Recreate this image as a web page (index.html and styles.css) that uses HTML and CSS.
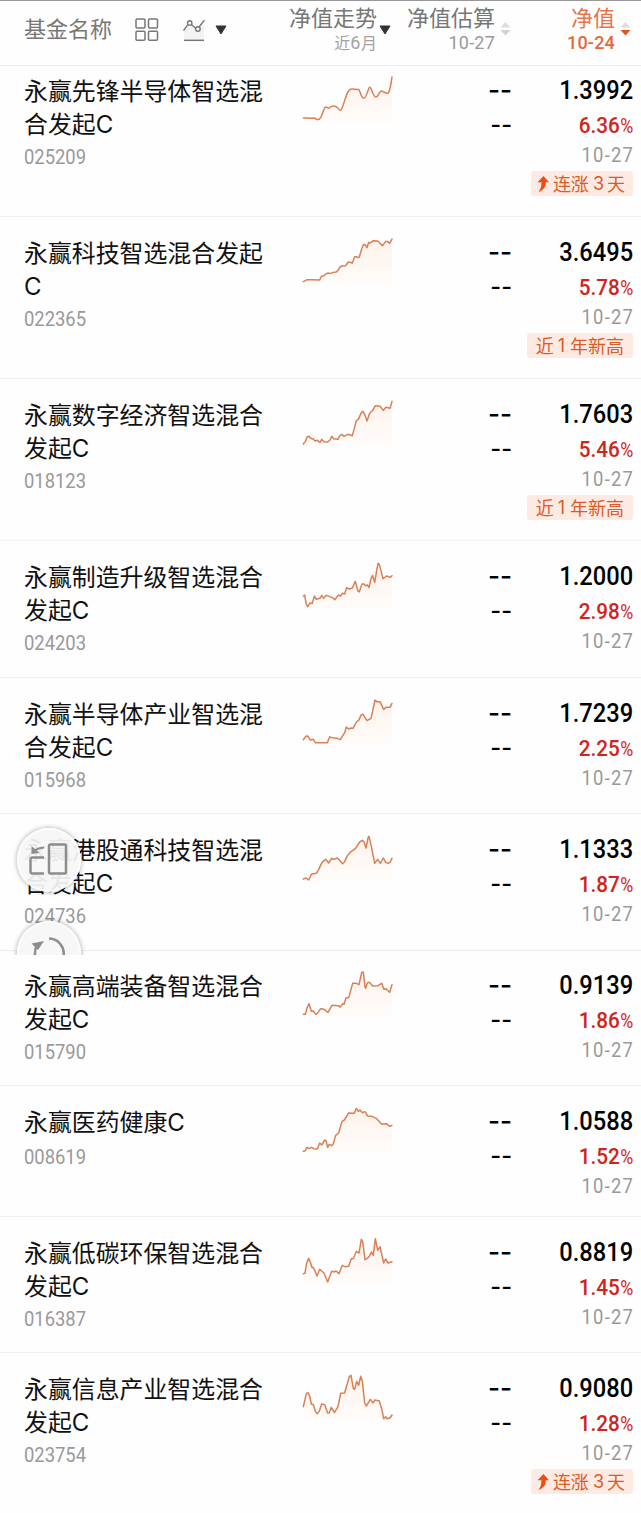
FILE: index.html
```html
<!DOCTYPE html>
<html lang="zh-CN">
<head>
<meta charset="utf-8">
<title>基金列表</title>
<link rel="stylesheet" href="styles.css">
</head>
<body>
<svg class="defs" width="0" height="0" aria-hidden="true">
  <defs>
    <linearGradient id="fade" x1="0" y1="0" x2="0" y2="1">
      <stop offset="0" stop-color="#fdeee4" stop-opacity=".8"/>
      <stop offset="1" stop-color="#fff8f3" stop-opacity=".4"/>
    </linearGradient>
    <symbol id="rise" viewBox="0 0 12 16"><path d="M6.500 0 12 6.300H8.800C8.800 10.500 7 14 1.500 16 4 12.500 4.500 10 4.400 6.300H.5Z" fill="#ee4d12"/></symbol>
  </defs>
</svg>
<div class="page">
  <header class="head">
    <div class="head-name">
      <span class="head-title">基金名称</span>
      <svg class="icon-grid" width="24" height="24" viewBox="0 0 24 24" fill="none" stroke="#777" stroke-width="1.500"><rect x="1" y="1" width="9" height="9" rx="1"/><rect x="13.500" y="1" width="9" height="9" rx="1"/><rect x="1" y="13.300" width="9" height="9" rx="1"/><rect x="13.500" y="13.300" width="9" height="9" rx="1"/></svg>
      <svg class="icon-chart" width="22" height="23" viewBox="0 0 22 23" fill="none" stroke="#777" stroke-width="1.400"><path d="M1 11v9h20V6l-6 4-8-4z" fill="#f3f3f3" stroke="none"/><path d="M.5 11.500 4.900 5.600M8.600 5.800l4.200 3.400M16.200 7.800 21.500 1.300"/><circle cx="6.700" cy="3.900" r="2.200"/><circle cx="14.900" cy="10" r="2.300"/><path d="M1 21.300h20" stroke-width="1.500"/></svg>
      <svg class="icon-drop" width="12" height="10" viewBox="0 0 12 10"><path d="M1 1h10L6 9z" fill="#333" stroke="#333" stroke-linejoin="round"/></svg>
    </div>
    <div class="head-trend"><span class="head-title">净值走势</span><span class="head-sub">近<span class="lat-sub">6</span>月</span></div>
    <svg class="icon-drop trend-drop" width="12" height="10" viewBox="0 0 12 10"><path d="M1 1h10L6 9z" fill="#333" stroke="#333" stroke-linejoin="round"/></svg>
    <div class="head-est"><span class="head-title">净值估算</span><span class="head-sub num">10-27</span></div>
    <svg class="icon-sort" width="11" height="14" viewBox="0 0 11 14"><path d="M5.500 0 10.500 5.500H.5z" fill="#ddd"/><path d="M5.500 13.500 10.500 8H.5z" fill="#d3d3d3"/></svg>
    <div class="head-nav"><span class="head-title">净值</span><span class="head-sub num">10-24</span></div>
    <svg class="icon-sort" width="11" height="14" viewBox="0 0 11 14"><path d="M5.500 0 10.500 5.500H.5z" fill="#ddd"/><path d="M5.500 13.500 10.500 8H.5z" fill="#e9531f"/></svg>
  </header>

  <main>
    <section class="row row-first">
      <div class="fund"><div class="name">永赢先锋半导体智选混<br>合发起<span class="lat">C</span></div><div class="code num">025209</div></div>
      <svg class="spark" viewBox="0 42 390 144"><path class="area" d="M40 174L75 174 85 180 93 171 107 141 117 145 128 137 140 141 151 151 160 137 174 98 184 87 206 88 217 113 227 111 239 82 250 108 263 109 273 92 294 101 306 52V186H40Z"/><path class="line" d="M40 174C52 174 62 175 74 174C80 180 88 182 93 171C100 157 102 142 107 141C112 141 115 147 119 143C126 136 134 138 140 141C147 146 149 155 154 148C164 131 169 88 184 87C193 86 203 90 206 88C211 91 213 115 221 114C230 115 235 82 239 82C245 82 248 110 258 111C265 111 269 93 273 93C279 93 285 100 294 100C301 92 303 70 306 51"/></svg>
      <div class="est"><span>--</span><span>--</span></div>
      <div class="nav"><span class="value num">1.3992</span><span class="pct num">6.36<i>%</i></span><span class="date num">10-27</span><span class="tag tag-rise"><svg width="12" height="16"><use href="#rise"/></svg>连涨<b>3</b>天</span></div>
    </section>

    <section class="row h162">
      <div class="fund"><div class="name">永赢科技智选混合发起<br><span class="lat">C</span></div><div class="code num">022365</div></div>
      <svg class="spark" viewBox="0 48 390 144"><path class="area" d="M40 185L55 179 90 180 105 163 140 153 155 139 188 128 195 109 208 111 222 74 250 62 278 77 306 58V192H40Z"/><path class="line" d="M40 185L52 179 66 179 89 180 94 169 101 168 108 161 115 159 119 161 130 157 139 156 144 151 150 141 156 138 167 137 175 126 187 129 194 110 199 110 203 113 208 111 216 84 221 73 226 75 231 83 236 67 241 69 250 62 263 63 270 70 278 77 287 64 293 65 299 70 306 57"/></svg>
      <div class="est"><span>--</span><span>--</span></div>
      <div class="nav"><span class="value num">3.6495</span><span class="pct num">5.78<i>%</i></span><span class="date num">10-27</span><span class="tag">近<b>1</b>年新高</span></div>
    </section>

    <section class="row h162">
      <div class="fund"><div class="name">永赢数字经济智选混合<br>发起<span class="lat">C</span></div><div class="code num">018123</div></div>
      <svg class="spark" viewBox="0 534 390 144"><path class="area" d="M40 672L55 649 90 667 187 647 200 601 219 573 231 603 256 557 280 571 300 565 306 544V678H40Z"/><path class="line" d="M40 672L46 664 52 650 57 649 62 655 70 657 75 663 82 661 90 667 95 658 102 665 113 666 120 660 125 649 131 656 144 658 149 648 155 643 162 649 174 643 187 647 192 629 199 602 205 598 214 578 219 574 224 583 231 603 239 580 248 571 256 557 270 559 280 571 288 562 300 565 306 544"/></svg>
      <div class="est"><span>--</span><span>--</span></div>
      <div class="nav"><span class="value num">1.7603</span><span class="pct num">5.46<i>%</i></span><span class="date num">10-27</span><span class="tag">近<b>1</b>年新高</span></div>
    </section>

    <section class="row h137">
      <div class="fund"><div class="name">永赢制造升级智选混合<br>发起<span class="lat">C</span></div><div class="code num">024203</div></div>
      <svg class="spark" viewBox="0 60 390 144"><path class="area" d="M40 168L53 200 73 168 135 179 170 143 196 124 207 155 248 106 265 69 279 116 306 107V204H40Z"/><path class="line" d="M40 168L44 165 49 194 53 200 60 189 67 190 73 168 79 178 91 174 95 166 101 175 109 166 126 172 135 179 145 165 152 168 157 160 164 162 170 143 177 147 187 144 196 124 204 154 208 155 216 132 222 132 226 137 232 135 237 143 243 116 248 106 254 127 264 70 268 73 279 116 290 108 301 112 306 107"/></svg>
      <div class="est"><span>--</span><span>--</span></div>
      <div class="nav"><span class="value num">1.2000</span><span class="pct num">2.98<i>%</i></span><span class="date num">10-27</span></div>
    </section>

    <section class="row h136">
      <div class="fund"><div class="name">永赢半导体产业智选混<br>合发起<span class="lat">C</span></div><div class="code num">015968</div></div>
      <svg class="spark" viewBox="0 471 390 144"><path class="area" d="M40 599L52 588 75 607 112 608 150 598 169 561 189 564 217 522 231 541 243 535 256 480 270 485 281 508 300 502 306 491V612H40Z"/><path class="line" d="M40 599L48 589 53 588 61 600 70 598 76 608 112 608 119 590 125 593 141 595 151 599 164 578 169 561 176 567 183 564 189 565 199 546 206 541 214 524 219 523 231 542 243 535 249 508 255 480 261 485 270 485 281 508 288 502 300 502 306 490"/></svg>
      <div class="est"><span>--</span><span>--</span></div>
      <div class="nav"><span class="value num">1.7239</span><span class="pct num">2.25<i>%</i></span><span class="date num">10-27</span></div>
    </section>

    <section class="row h137">
      <div class="fund"><div class="name">永赢港股通科技智选混<br>合发起<span class="lat">C</span></div><div class="code num">024736</div></div>
      <svg class="spark" viewBox="0 39 390 144"><path class="area" d="M40 177L66 162 82 157 107 118 140 114 158 131 180 97 217 61 228 84 236 50 254 129 294 130 306 115V183H40Z"/><path class="line" d="M40 177L48 174 56 180 65 162 79 160 86 149 96 127 107 118 116 129 125 115 132 118 142 114 149 121 158 131 164 125 171 109 180 97 196 86 209 66 217 61 222 66 228 84 234 54 237 49 244 79 254 130 263 118 271 130 280 114 287 127 294 130 300 127 306 115"/></svg>
      <div class="est"><span>--</span><span>--</span></div>
      <div class="nav"><span class="value num">1.1333</span><span class="pct num">1.87<i>%</i></span><span class="date num">10-27</span></div>
    </section>

    <section class="row row-seam">
      <div class="fund"><div class="name">永赢高端装备智选混合<br>发起<span class="lat">C</span></div><div class="code num">015790</div></div>
      <svg class="spark" viewBox="0 447 390 144"><path class="area" d="M40 583L57 551 76 581 114 577 156 556 176 533 189 490 208 494 218 454 226 505 275 490 299 517 306 494V588H40Z"/><path class="line" d="M40 583L46 583 52 561 57 551 64 574 70 573 77 583 82 580 92 566 102 568 114 577 126 556 144 557 151 561 158 551 162 553 168 533 176 533 188 490 199 490 207 494 215 458 220 456 225 500 227 505 232 489 238 487 248 498 264 497 275 490 282 508 288 506 299 517 306 494"/></svg>
      <div class="est"><span>--</span><span>--</span></div>
      <div class="nav"><span class="value num">0.9139</span><span class="pct num">1.86<i>%</i></span><span class="date num">10-27</span></div>
    </section>

    <section class="row h131">
      <div class="fund"><div class="name">永赢医药健康<span class="lat">C</span></div><div class="code num">008619</div></div>
      <svg class="spark" viewBox="0 45 390 144"><path class="area" d="M40 184L82 177 104 149 119 166 136 142 156 94 179 68 200 56 260 86 299 109 306 106V187H40Z"/><path class="line" d="M40 184L45 183 51 172 58 175 65 172 71 176 82 177 89 159 95 165 104 150 108 152 113 172 118 163 125 167 130 161 137 136 146 129 156 94 163 90 176 69 187 70 193 70 199 55 205 64 210 60 217 68 225 65 233 78 246 79 260 86 275 103 289 101 299 109 306 106"/></svg>
      <div class="est"><span>--</span><span>--</span></div>
      <div class="nav"><span class="value num">1.0588</span><span class="pct num">1.52<i>%</i></span><span class="date num">10-27</span></div>
    </section>

    <section class="row h136">
      <div class="fund"><div class="name">永赢低碳环保智选混合<br>发起<span class="lat">C</span></div><div class="code num">016387</div></div>
      <svg class="spark" viewBox="0 438 390 144"><path class="area" d="M40 551L56 506 80 557 113 575 150 548 178 527 207 489 214 448 226 512 244 486 256 446 281 517 306 515V582H40Z"/><path class="line" d="M40 551L45 550 50 519 56 505 62 519 65 531 71 534 81 558 89 538 102 549 113 576 125 544 132 546 138 543 147 551 157 526 165 530 176 529 184 506 190 506 199 484 207 489 214 448 218 454 225 509 231 506 238 499 244 486 250 496 256 446 263 481 270 470 281 519 287 507 294 519 306 515"/></svg>
      <div class="est"><span>--</span><span>--</span></div>
      <div class="nav"><span class="value num">0.8819</span><span class="pct num">1.45<i>%</i></span><span class="date num">10-27</span></div>
    </section>

    <section class="row row-last">
      <div class="fund"><div class="name">永赢信息产业智选混合<br>发起<span class="lat">C</span></div><div class="code num">023754</div></div>
      <svg class="spark" viewBox="0 36 390 144"><path class="area" d="M40 140L52 98 82 161 97 131 115 161 133 158 154 100 182 46 193 88 212 50 228 138 268 122 282 177 306 166V180H40Z"/><path class="line" d="M40 140L49 101 54 98 59 108 64 132 70 134 77 156 82 161 88 153 95 132 104 134 113 159 118 158 124 142 133 158 144 140 152 100 164 99 178 50 183 46 190 86 194 88 200 64 206 76 212 49 217 64 224 129 229 138 241 118 249 129 255 120 268 123 275 146 281 176 287 170 292 176 300 174 306 165"/></svg>
      <div class="est"><span>--</span><span>--</span></div>
      <div class="nav"><span class="value num">0.9080</span><span class="pct num">1.28<i>%</i></span><span class="date num">10-27</span><span class="tag tag-rise"><svg width="12" height="16"><use href="#rise"/></svg>连涨<b>3</b>天</span></div>
    </section>
  </main>

  <div class="float float-rotate">
    <svg width="64" height="64" viewBox="0 0 64 64" fill="none" stroke="#8d8d8d" stroke-width="2.500"><rect x="32" y="16.500" width="17" height="29" rx="1.500"/><path d="M27 29.500H15.500q-2 0-2 2V43.500q0 2 2 2H27"/><path d="M17 23.500Q20 20 27 19.500" stroke-width="2"/><path d="M14.500 18V26L22.500 25z" fill="#8d8d8d" stroke="none"/></svg>
  </div>
  <div class="float-clip">
    <div class="float">
      <svg width="64" height="64" viewBox="0 0 64 64" fill="none" stroke="#8d8d8d" stroke-width="2.500"><path d="M32 17.500A15 15 0 0 1 46.500 35M20 24Q17.500 29 18 35"/><path d="M14.500 22.500 27 20 21 29z" fill="#8d8d8d" stroke="none"/></svg>
    </div>
  </div>
</div>
</body>
</html>
```
FILE: styles.css
```css
* { box-sizing: border-box; }
body {
  margin: 0;
  background: #fefefe;
  color: #111;
  font-family: "Noto Sans CJK SC", sans-serif;
}
svg { display: block; flex: none; }
.defs { position: absolute; }
.page {
  position: relative;
  width: 641px;
  height: 1513px;
  overflow: hidden;
  border-top: 1px solid #999;
}
.num { font-family: Roboto, sans-serif; }

/* header */
.head {
  display: flex;
  height: 65px;
  border-bottom: 1px solid #ededed;
  color: #777;
}
.head-title {
  font-size: 22px;
  line-height: 32px;
  font-weight: 400;
  white-space: nowrap;
}
.head-name { display: flex; width: 265px; padding-left: 24px; }
.head-name .head-title { padding-top: 10px; }
.icon-grid { margin: 17px 0 0 23px; }
.icon-chart { margin: 18px 0 0 24px; }
.icon-drop { margin: 24px 0 0 10px; }
.head-trend, .head-est, .head-nav {
  display: flex;
  flex-direction: column;
  align-items: flex-end;
  height: 60px;
}
.head-trend .head-title, .head-est .head-title, .head-nav .head-title {
  height: 31px;
  line-height: 30px;
}
.head-trend { width: 112px; }
.trend-drop { margin: 24px 0 0 2px; }
.head-est { width: 104px; }
.head-sub {
  font-size: 16px;
  line-height: 21px;
  color: #a3a3a3;
}
.lat-sub { font-family: Roboto, sans-serif; font-size: 18px; letter-spacing: .5px; }
.head-sub.num { font-size: 18px; line-height: 22px; letter-spacing: .2px; color: #999; }
.icon-sort { margin: 21px 0 0 5px; }
.head-nav { width: 104px; color: #e97448; }
.head-nav .head-sub.num { color: #e5683a; font-weight: 500; }

/* rows */
.row {
  display: grid;
  grid-template-columns: 290px 130px 92px 121px;
  align-items: start;
  padding-top: 19px;
  border-bottom: 1px solid #efefef;
}
.h162 { height: 162px; }
.h137 { height: 137px; }
.h136 { height: 136px; }
.h131 { height: 131px; }
.row-first { height: 151px; padding-top: 8px; }
.row-seam { height: 135px; padding-top: 18px; }
.row-last { height: 160px; border-bottom: 0; }

.fund { padding-left: 24px; margin-top: -1px; }
.name {
  font-size: 23.900px;
  line-height: 33.200px;
  white-space: nowrap;
}
.lat { font-family: Inter, sans-serif; font-size: 24px; line-height: 1; }
.code {
  margin-top: 3px;
  font-size: 20px;
  line-height: 30px;
  color: #999;
  transform: scaleX(.92);
  transform-origin: left;
}
.h131 .code { margin-top: 5px; }
.spark { width: 130px; height: 48px; }
.line {
  fill: none;
  stroke: #d98056;
  stroke-width: 4.500;
  stroke-linejoin: round;
  stroke-linecap: round;
}
.area { fill: url(#fade); }

.est {
  display: flex;
  flex-direction: column;
  align-items: flex-end;
  margin-top: -1px;
  font-family: Inter, sans-serif;
  font-size: 26px;
  font-weight: 500;
  line-height: 34px;
  color: #000;
}
.est span + span { font-size: 23.500px; line-height: 35px; }

.nav { display: flex; flex-direction: column; align-items: flex-end; }
.nav .num { transform: scaleX(.92); transform-origin: right; }
.nav .value { transform: scaleX(.91); }
.value { font-size: 26px; font-weight: 500; line-height: 33px; color: #000; }
.pct { font-size: 22.500px; font-weight: 500; line-height: 36px; color: #cf2420; }
.pct i { font-style: normal; font-weight: 400; display: inline-block; font-size: 21px; line-height: 1; transform: scaleX(.92); transform-origin: right; margin-left: -1px; }
.date { font-size: 20px; line-height: 25px; color: #999; letter-spacing: 1.300px; margin-right: -1px; }
.tag {
  display: flex;
  align-items: center;
  height: 25px;
  margin-top: 3px;
  padding: 0 9px;
  border-radius: 3px;
  background: #fdebe3;
  color: #dc5a26;
  font-size: 18px;
  line-height: 23px;
  white-space: nowrap;
}
.tag b { font-family: Inter, sans-serif; font-weight: 400; font-size: 18px; margin: 0 5px 0 4px; }
.tag-rise { padding: 0 8px 0 6px; }
.tag-rise b { margin: 0 3px 0 4px; }
.tag-rise svg { margin-right: 4px; }

/* floating controls */
.float {
  width: 64px;
  height: 64px;
  border-radius: 50%;
  background: rgba(246, 246, 246, .93);
  box-shadow: 0 0 4px 1px rgba(0, 0, 0, .25), inset 0 0 0 2px rgba(255, 255, 255, .6);
}
.float-rotate { position: absolute; left: 17px; top: 827px; }
.float-clip {
  position: absolute;
  left: 9px;
  top: 911px;
  width: 80px;
  height: 43px;
  padding: 9px 8px 0;
  overflow: hidden;
}
```
